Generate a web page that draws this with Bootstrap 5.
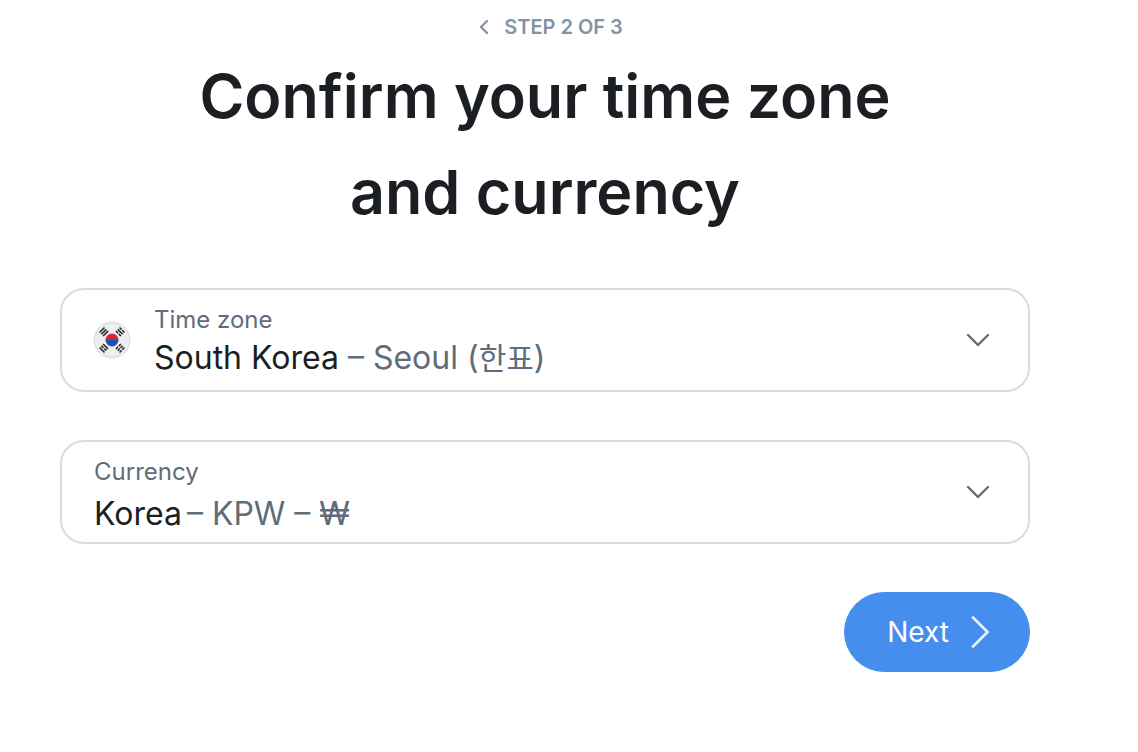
<!DOCTYPE html>
<html lang="en">
<head>
<meta charset="utf-8">
<meta name="viewport" content="width=device-width, initial-scale=1">
<title>Confirm your time zone and currency</title>
<link href="https://cdn.jsdelivr.net/npm/bootstrap@5.3.0/dist/css/bootstrap.min.css" rel="stylesheet">
<style>
  body { font-family: Inter, "Noto Sans CJK KR", sans-serif; color: #1b1f23; background: #fff; }
  .setup { padding: 12px 108px 48px 60px; }
  .step-link { font-size: 20px; line-height: 30px; font-weight: 600; color: #8593a3; gap: 15px; padding-left: 12px; }
  .setup-title { font-size: 61px; line-height: 96px; font-weight: 600; margin: 6px 0 48px; }
  .picker { min-height: 104px; border: 2px solid #d7dce1; border-radius: 24px; padding: 8px 38px 8px 32px; }
  .picker + .picker { margin-top: 48px; }
  .picker:focus-within { border-color: #468eee; }
  .picker-label { font-size: 24px; line-height: 36px; color: #5f6c79; }
  .picker-value { font-size: 32px; line-height: 40px; }
  .picker-value .detail { color: #5f6c79; }
  .picker-value [lang=ko] { font-size: 30px; line-height: 1; }
  .picker-value.currency-value { line-height: 48px; margin-bottom: -8px; gap: 5px; }
  .picker select { opacity: 0; cursor: pointer; }
  .flag { margin: 0 23px 0 -1px; }
  .btn-next { --bs-btn-bg: #468eee; --bs-btn-border-color: #468eee; --bs-btn-hover-bg: #387fdf; height: 80px; padding: 0 40px 0 42px; font-size: 28px; font-weight: 400; gap: 22px; margin-top: 48px; }
</style>
</head>
<body>
<main class="setup">
  <form>
    <header class="text-center">
      <a href="#" class="step-link d-inline-flex align-items-center text-decoration-none">
        <svg width="10" height="16" viewBox="0 0 10 16" fill="none" stroke="currentColor" stroke-width="2.4" stroke-linecap="round" stroke-linejoin="round" aria-hidden="true"><path d="M8 2 2 8l6 6"/></svg>
        <span>STEP 2 OF 3</span>
      </a>
      <h1 class="setup-title">Confirm your time zone<br>and currency</h1>
    </header>

    <div class="picker position-relative d-flex align-items-center">
      <svg class="flag flex-shrink-0" width="38" height="38" viewBox="0 0 38 38" aria-hidden="true">
        <circle cx="19" cy="19" r="19" fill="#f1f4f8"/>
        <circle cx="19" cy="19" r="17.5" fill="#eee" stroke="#d3dae6" stroke-width="1"/>
        <path d="M12.500 19a6.500 6.500 0 0 1 13 0z" fill="#cd2a35"/>
        <path d="M12.500 19a6.500 6.500 0 0 0 13 0z" fill="#1e50b5"/>
        <g stroke="#292929" stroke-width="1.6">
          <g transform="translate(10.800 10.800) rotate(-45)"><path d="M-3.500-2.500h7M-3.500 0h7M-3.500 2.500h7"/></g>
          <g transform="translate(27.200 10.800) rotate(45)"><path d="M-3.500-2.500h3m1 0h3M-3.500 0h7M-3.500 2.500h3m1 0h3"/></g>
          <g transform="translate(10.800 27.200) rotate(45)"><path d="M-3.500-2.500h7M-3.500 0h3m1 0h3M-3.500 2.500h7"/></g>
          <g transform="translate(27.200 27.200) rotate(-45)"><path d="M-3.500-2.500h3m1 0h3M-3.500 0h3m1 0h3M-3.500 2.500h3m1 0h3"/></g>
        </g>
      </svg>
      <div class="flex-grow-1">
        <label class="picker-label d-block" for="timezone">Time zone</label>
        <div class="picker-value" aria-hidden="true">South Korea <span class="detail">– Seoul (<span lang="ko">한표</span>)</span></div>
      </div>
      <svg class="chevron" width="24" height="14" viewBox="0 0 24 14" fill="none" stroke="#5f6c79" stroke-width="2.4" stroke-linecap="round" stroke-linejoin="round" aria-hidden="true"><path d="M2 2l10 10 10-10"/></svg>
      <select id="timezone" name="timezone" class="position-absolute top-0 start-0 w-100 h-100">
        <option>South Korea – Seoul (한표)</option>
      </select>
    </div>

    <div class="picker position-relative d-flex align-items-center">
      <div class="flex-grow-1">
        <label class="picker-label d-block" for="currency">Currency</label>
        <div class="picker-value currency-value d-flex" aria-hidden="true"><span>Korea</span><span class="detail">– KPW – ₩</span></div>
      </div>
      <svg class="chevron" width="24" height="14" viewBox="0 0 24 14" fill="none" stroke="#5f6c79" stroke-width="2.4" stroke-linecap="round" stroke-linejoin="round" aria-hidden="true"><path d="M2 2l10 10 10-10"/></svg>
      <select id="currency" name="currency" class="position-absolute top-0 start-0 w-100 h-100">
        <option>Korea – KPW – ₩</option>
      </select>
    </div>

    <div class="d-flex justify-content-end">
      <button type="submit" class="btn btn-primary btn-next rounded-pill d-inline-flex align-items-center">
        Next
        <svg width="18" height="34" viewBox="0 0 18 34" fill="none" stroke="#e8f1fd" stroke-width="2.6" stroke-linecap="round" stroke-linejoin="round" aria-hidden="true"><path d="M2 2.500 16.500 17 2 31.500"/></svg>
      </button>
    </div>
  </form>
</main>
<script src="https://cdn.jsdelivr.net/npm/bootstrap@5.3.0/dist/js/bootstrap.bundle.min.js"></script>
</body>
</html>
